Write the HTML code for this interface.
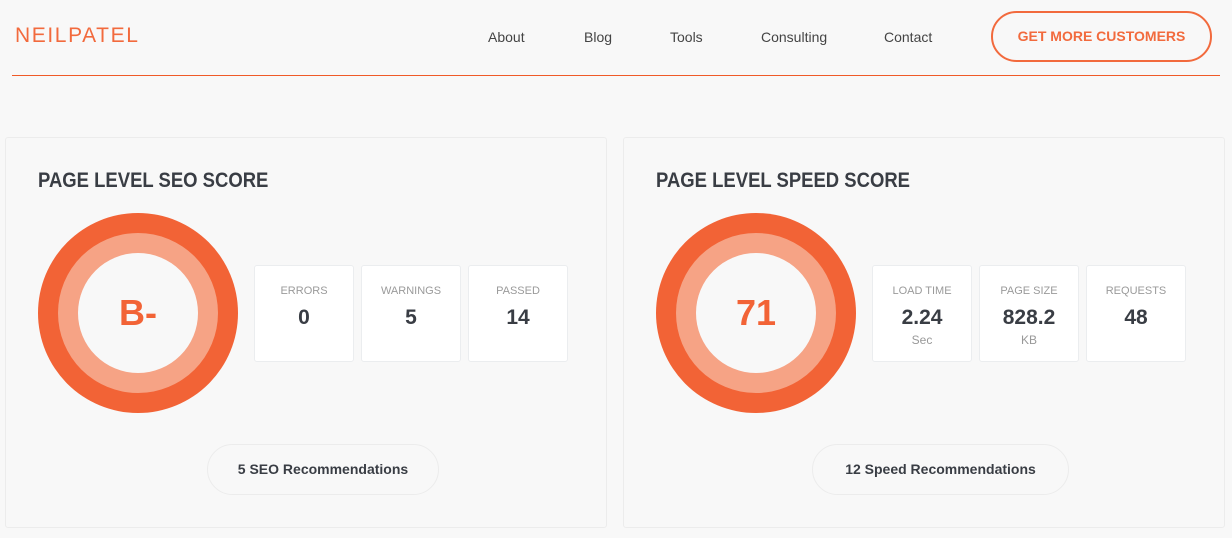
<!DOCTYPE html><html><head><style>
body{margin:0;width:1232px;height:538px;background:#f8f8f8;font-family:"Liberation Sans",sans-serif;position:relative;overflow:hidden;color:#393d44}
.a{position:absolute}
.logo{left:15px;top:24px;font-size:21px;letter-spacing:1.6px;color:#f26a3d}
.nav{top:29px;font-size:14px;color:#444}
.cta{left:991px;top:11px;width:221px;height:51px;border:2px solid #f26a3d;border-radius:26px;box-sizing:border-box;color:#f26a3d;font-weight:bold;font-size:14px;text-align:center;line-height:47px}
.line{left:12px;top:75px;width:1208px;height:0;border-top:1px solid #f05a28}
.card{top:137px;width:602px;height:391px;border:1px solid #ececec;box-sizing:border-box;border-radius:3px}
.h{font-size:21px;font-weight:bold;top:169px;transform:scaleX(0.88);transform-origin:left}
.ring{width:200px;height:200px;border-radius:50%;background:#f26336;top:213px}
.ring2{width:160px;height:160px;border-radius:50%;background:#f6a385;top:20px;left:20px}
.ring3{width:120px;height:120px;border-radius:50%;background:#f8f8f8;top:20px;left:20px;text-align:center;line-height:120px;color:#f26336;font-size:36px;font-weight:bold}
.box{top:265px;width:100px;height:97px;background:#fff;border:1px solid #ebedef;box-sizing:border-box;border-radius:3px;text-align:center}
.box .l{margin-top:19px;font-size:11px;color:#9a9a9a}
.box .v{margin-top:9px;font-size:21px;font-weight:bold}
.box .s{margin-top:3px;font-size:12px;color:#999}
.btn{top:444px;height:51px;border:1px solid #ececec;border-radius:26px;box-sizing:border-box;text-align:center;line-height:49px;font-weight:bold;font-size:14px}
</style></head><body>
<div class="a logo">NEILPATEL</div>
<div class="a nav" style="left:488px">About</div>
<div class="a nav" style="left:584px">Blog</div>
<div class="a nav" style="left:670px">Tools</div>
<div class="a nav" style="left:761px">Consulting</div>
<div class="a nav" style="left:884px">Contact</div>
<div class="a cta">GET MORE CUSTOMERS</div>
<div class="a line"></div>

<div class="a card" style="left:5px"></div>
<div class="a card" style="left:623px"></div>
<div class="a h" style="left:38px">PAGE LEVEL SEO SCORE</div>
<div class="a h" style="left:656px">PAGE LEVEL SPEED SCORE</div>
<div class="a ring" style="left:38px"><div class="a ring2"><div class="a ring3">B-</div></div></div>
<div class="a ring" style="left:656px"><div class="a ring2"><div class="a ring3">71</div></div></div>
<div class="a box" style="left:254px"><div class="l">ERRORS</div><div class="v">0</div></div>
<div class="a box" style="left:361px"><div class="l">WARNINGS</div><div class="v">5</div></div>
<div class="a box" style="left:468px"><div class="l">PASSED</div><div class="v">14</div></div>
<div class="a box" style="left:872px"><div class="l">LOAD TIME</div><div class="v">2.24</div><div class="s">Sec</div></div>
<div class="a box" style="left:979px"><div class="l">PAGE SIZE</div><div class="v">828.2</div><div class="s">KB</div></div>
<div class="a box" style="left:1086px"><div class="l">REQUESTS</div><div class="v">48</div></div>
<div class="a btn" style="left:207px;width:232px">5 SEO Recommendations</div>
<div class="a btn" style="left:812px;width:257px">12 Speed Recommendations</div>
</body></html>
